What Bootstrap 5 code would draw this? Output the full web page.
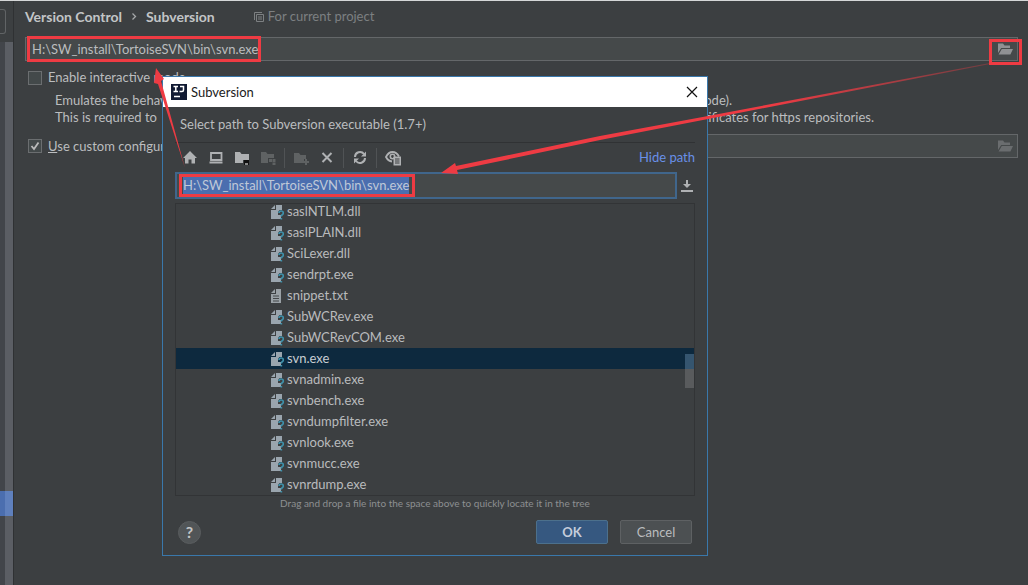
<!DOCTYPE html>
<html lang="en">
<head>
<meta charset="utf-8">
<meta name="viewport" content="width=device-width, initial-scale=1">
<title>Version Control – Subversion</title>
<link href="https://cdn.jsdelivr.net/npm/bootstrap@5.3.0/dist/css/bootstrap.min.css" rel="stylesheet">
<style>
  body { background: #3c3f41; color: #bbbdbf; font: 13px/17px Lato, "Open Sans", sans-serif; border-top: 1px solid #d5d7d8; overflow: hidden; }
  svg { display: block; flex: none; }
  .settings { min-height: calc(100vh - 1px); }
  /* tree edge on the left of the settings page */
  .tree-edge { width: 14px; border-right: 1px solid #2f3133; background: #3c3f41; }
  .search-end { width: 6px; height: 25px; margin-top: 8px; border: 1px solid #616466; border-left: 0; border-radius: 0 3px 3px 0; }
  .tree-body { margin-top: 8px; background: linear-gradient(90deg, #42454a 5px, #5b5e64 5px); }
  .tree-picked { height: 25px; margin-bottom: 69px; background: linear-gradient(90deg, #4b6eaf 5px, #5f80bd 5px); }
  .page-main { padding: 7px 10px 0 11px; min-width: 0; }
  .crumbs { font-weight: 700; font-size: 14px; color: #c3c5c7; }
  .scope { color: #7d8082; margin-left: 39px; }
  .path-box { height: 24px; background: #45494a; border: 1px solid #646769; }
  .exe-path { margin-top: 12px; }
  .path-box input { border: 0; background: transparent; color: inherit; outline: 0; padding: 0 6px; min-width: 0; }
  .path-box button, .tool { border: 0; background: transparent; padding: 0; color: #afb1b3; }
  .path-box button { color: #8f9193; }
  .path-box button:disabled { color: #6a6d6f; }
  .tick-row { margin-top: 8px; padding-left: 3px; gap: 6px; }
  .tick { appearance: none; width: 14px; height: 14px; margin: 0; border: 1px solid #6b6e70; background: #43494a; flex: none; }
  .tick:checked { background: #43494a url("data:image/svg+xml,%3Csvg xmlns='http://www.w3.org/2000/svg' viewBox='0 0 12 12'%3E%3Cpath d='M2.5 6l2.5 3L9.5 2.5' fill='none' stroke='%23bbb' stroke-width='1.8'/%3E%3C/svg%3E"); }
  .hints { padding-left: 30px; margin-top: 6px; white-space: nowrap; }
  .hint-a { width: 677px; }
  .hint-b { width: 819px; }
  /* file chooser window */
  .chooser { left: 162px; top: 75px; width: 546px; height: 480px; border: 1px solid #3a78ab; background: #3c3f41; z-index: 2; }
  .title-bar { height: 30px; background: #fff; color: #1b1b1b; padding: 0 9px 0 8px; }
  .title-bar button { border: 0; background: transparent; padding: 0; color: #111; }
  .chooser-body { padding: 9px 12px 0; }
  .lead-in { padding-left: 5px; }
  .tools { height: 30px; border-top: 1px solid #303234; margin-top: 9px; padding: 0 0 0 7px; }
  .tool-set { gap: 10px; }
  .tool svg, .tool { width: 16px; height: 16px; }
  .tool:disabled { color: #5f6263; }
  .vline { width: 1px; height: 20px; margin: 0 -2px; background: #505355; }
  .hide-path { color: #6990e8; text-decoration: none; }
  .typed { height: 27px; border: 2px solid #40668c; background: #45494a; }
  .typed input { border: 0; outline: 0; padding: 0 6px; background: transparent; color: #bfc8d8; min-width: 0; }
  .typed input::selection { background: #4b6eaf; color: #bfc8d8; }
  .typed-row .tool { margin-left: 2px; }
  .files { height: 293px; margin-top: 4px; border: 1px solid #323436; overflow: hidden; }
  .files ul { margin: -3px 0 0; }
  .files li { height: 21px; padding-left: 94px; gap: 3px; color: #b9bbbd; }
  .files li.picked { background: #0d293e; color: #c8cdd2; }
  .rail { right: 0; top: 0; bottom: 0; width: 9px; }
  .rail i { position: absolute; top: 150px; width: 9px; height: 34px; background: linear-gradient(#35556f 15px, #595b5d 15px); }
  .tip { font-size: 10px; line-height: 14px; color: #8d8f91; }
  .foot { margin-top: 10px; padding: 0 3px; gap: 12px; }
  .help { width: 23px; height: 23px; border: 1px solid #5a5d5f; border-radius: 50%; background: #515557; color: #c3c5c7; font-weight: 700; font-size: 16px; line-height: 20px; padding: 0; }
  .act { width: 72px; height: 24px; padding: 0; font-size: 13px; line-height: 17px; border-radius: 2px; color: #bbbdbf; background: #4c5052; border: 1px solid #5e6163; }
  .act.main { background: #365880; border-color: #4c708c; font-weight: 700; color: #c5cddb; }
  .marks { left: 0; top: 0; z-index: 3; pointer-events: none; }
</style>
</head>
<body class="position-relative">
<svg width="0" height="0" class="position-absolute" aria-hidden="true">
  <symbol id="folder-open" viewBox="0 0 16 16"><path fill="currentColor" d="M1 2.500h5l1.500 2H13V7H4.200L1 12zM4.800 8H16l-2.600 5.500H1.600z"/></symbol>
  <symbol id="unknown-file" viewBox="0 0 16 16"><path fill="#9aa5ae" d="M6 1h6v5H9.500L8 8v7H1V6h5z"/><path fill="#9aa5ae" d="M5 1v4H1zM8 11h3v4H8z"/><path d="M9 9q.2-2 2.200-2t2.200 2q0 1-1.200 1.800-.9.600-.9 1.700M11.300 14v1.600" fill="none" stroke="#3e91ab" stroke-width="1.700"/></symbol>
  <symbol id="text-file" viewBox="0 0 16 16"><path fill="#9aa1a6" d="M6 1h5v14H1V6h5zM5 1v4H1z"/><path d="M3 8h6M3 10.500h6M3 13h6" stroke="#45484a" stroke-width="1"/></symbol>
</svg>

<div class="settings d-flex">
  <aside class="tree-edge d-flex flex-column flex-shrink-0">
    <div class="search-end"></div>
    <div class="tree-body flex-grow-1 d-flex flex-column justify-content-end"><div class="tree-picked"></div></div>
  </aside>
  <main class="page-main flex-grow-1">
    <div class="d-flex align-items-center">
      <nav class="crumbs d-flex align-items-center" aria-label="Breadcrumb">
        <span>Version Control</span>
        <svg class="mx-2" width="8" height="9" viewBox="0 0 8 9"><path d="M2.500 1.500l3 3-3 3" fill="none" stroke="#a5a7a9" stroke-width="1.300"/></svg>
        <span>Subversion</span>
      </nav>
      <span class="scope d-flex align-items-center">
        <svg class="me-1" width="10" height="10" viewBox="0 0 10 10"><path d="M.5 8V.5H8M2.500 2.500h7v7h-7zM4 5h4M4 7h4" fill="none" stroke="currentColor"/></svg>For current project</span>
    </div>
    <div class="path-box exe-path d-flex align-items-center pe-1">
      <input class="flex-grow-1" aria-label="Path to Subversion executable" value="H:\SW_install\TortoiseSVN\bin\svn.exe">
      <button type="button" aria-label="Browse"><svg width="16" height="16"><use href="#folder-open"/></svg></button>
    </div>
    <div class="tick-row d-flex align-items-center">
      <input class="tick" type="checkbox" id="inter"><label for="inter">Enable interactive mode</label>
    </div>
    <div class="hints">
      <div class="hint-a d-flex justify-content-between"><span>Emulates the behavior</span><span>mode).</span></div>
      <div class="hint-b d-flex justify-content-between"><span>This is required to</span><span>certificates for https repositories.</span></div>
    </div>
    <div class="tick-row d-flex align-items-center">
      <input class="tick" type="checkbox" id="conf" checked><label for="conf"><u>U</u>se custom configuration directory:</label>
      <div class="path-box d-flex align-items-center flex-grow-1 pe-1">
        <input class="flex-grow-1" aria-label="Configuration directory" disabled>
        <button type="button" disabled aria-label="Browse configuration directory"><svg width="16" height="16"><use href="#folder-open"/></svg></button>
      </div>
    </div>
  </main>
</div>

<section class="chooser position-absolute" role="dialog" aria-label="Subversion">
  <header class="title-bar d-flex align-items-center">
    <svg width="16" height="16" viewBox="0 0 16 16"><path fill="#111a33" d="M0 0h16v16H0z"/><path d="M2.500 2.500H7M4.800 2.500v5M2.500 7.500H7M9 2.500h3.500V6q0 1.500-1.500 1.500H8.500M3 12.500h6" fill="none" stroke="#fff" stroke-width="1.500"/></svg>
    <span class="ps-1">Subversion</span>
    <button type="button" class="ms-auto" aria-label="Close"><svg width="12" height="12" viewBox="0 0 12 12"><path d="M1 1l10 10M11 1L1 11" stroke="currentColor" stroke-width="1.200"/></svg></button>
  </header>
  <div class="chooser-body">
    <div class="lead-in">Select path to Subversion executable (1.7+)</div>
    <div class="tools d-flex align-items-center">
      <div class="tool-set d-flex align-items-center">
        <button class="tool" aria-label="Home"><svg viewBox="0 0 16 16"><path fill="currentColor" d="M8 1l7 7h-2v5.500H9.500v-4h-3v4H3V8H1z"/></svg></button>
        <button class="tool" aria-label="Desktop"><svg viewBox="0 0 16 16"><path fill="none" stroke="currentColor" stroke-width="1.800" d="M3 3h10.500v7H3z"/><path fill="currentColor" d="M1.500 11.500h13v2h-13z"/></svg></button>
        <button class="tool" aria-label="Project"><svg viewBox="0 0 16 16"><path fill="currentColor" d="M1 2h5l1.500 2H15v6H9v3H1z"/><path fill="#111" d="M10 10h5v5h-5z"/><path d="M11 14h3" stroke="#fff"/></svg></button>
        <button class="tool" disabled aria-label="Module"><svg viewBox="0 0 16 16"><path fill="currentColor" d="M1 2h5l1.500 2H14v4H8v5H1zM9 9h3v3H9zM12.500 9h3v3h-3zM12.500 12.500h3V15h-3z"/></svg></button>
        <span class="vline"></span>
        <button class="tool" disabled aria-label="New folder"><svg viewBox="0 0 16 16"><path fill="currentColor" d="M1 3h5l1.500 2H13v4h-2v4H1zM12 9h2v2h2v2h-2v2h-2v-2h-1v-2h1z"/></svg></button>
        <button class="tool" aria-label="Delete"><svg viewBox="0 0 16 16"><path d="M3.500 3l9 9M12.500 3l-9 9" stroke="currentColor" stroke-width="2"/></svg></button>
        <span class="vline"></span>
        <button class="tool" aria-label="Refresh"><svg viewBox="0 0 16 16"><path fill="none" stroke="currentColor" stroke-width="2" d="M3 7a5 5 0 0 1 9-3M13 8a5 5 0 0 1-9 3"/><path fill="currentColor" d="M14 1.500v5H9zM2 13.500v-5h5z"/></svg></button>
        <span class="vline"></span>
        <button class="tool" aria-label="Show hidden files"><svg viewBox="0 0 16 16"><path fill="none" stroke="currentColor" stroke-width="1.800" d="M14 6.500Q11.500 2 7.500 2T1 7q2 4 6 4.500"/><circle cx="7.500" cy="6.500" r="2.200" fill="none" stroke="currentColor" stroke-width="1.600"/><path fill="currentColor" d="M8.500 6.500H16V15.500H8.500z"/><path d="M10 9h4.500M10 11h4.500M10 13h4.500" stroke="#3c3f41"/></svg></button>
      </div>
      <a class="hide-path ms-auto" href="#">Hide path</a>
    </div>
    <div class="typed-row d-flex align-items-center">
      <div class="typed d-flex flex-grow-1"><input id="typed" class="flex-grow-1" aria-label="Path" value="H:\SW_install\TortoiseSVN\bin\svn.exe"></div>
      <button class="tool flex-shrink-0" aria-label="History"><svg viewBox="0 0 16 16"><path fill="currentColor" d="M7 2h2v4h3l-4 4-4-4h3zM2 12h12v2H2z"/></svg></button>
    </div>
    <div class="files position-relative">
      <ul class="list-unstyled" id="files"></ul>
      <div class="rail position-absolute"><i></i></div>
    </div>
    <div class="tip text-center">Drag and drop a file into the space above to quickly locate it in the tree</div>
    <div class="foot d-flex align-items-center">
      <button type="button" class="help me-auto" aria-label="Help">?</button>
      <button type="button" class="act main">OK</button>
      <button type="button" class="act">Cancel</button>
    </div>
  </div>
</section>

<!-- red call-out boxes and arrows drawn over the windows -->
<svg class="marks position-absolute" width="1028" height="584" viewBox="0 1 1028 584" aria-hidden="true">
  <defs><linearGradient id="fade" gradientUnits="userSpaceOnUse" x1="441" y1="0" x2="990" y2="0"><stop offset=".6" stop-color="#ee3b43"/><stop offset="1" stop-color="#ee3b43" stop-opacity=".3"/></linearGradient></defs>
  <g fill="none" stroke="#ee3b43" stroke-width="3"><path d="M28.500 37.500h231v23h-231zM180.500 175.500h233v20h-233zM990.500 40.500h30v23h-30z"/></g>
  <path fill="#ee3b43" d="M156 68l8 11-3 2 24 87-27-84-4-1z"/>
  <path fill="url(#fade)" d="M441 173l14-10 1 3 144-30 108-20 282-53v1L708 119l-108 21-143 30 1 4z"/>
</svg>

<script src="https://cdn.jsdelivr.net/npm/bootstrap@5.3.0/dist/js/bootstrap.bundle.min.js"></script>
<script>
  const names = ["saslNTLM.dll", "saslPLAIN.dll", "SciLexer.dll", "sendrpt.exe", "snippet.txt", "SubWCRev.exe", "SubWCRevCOM.exe", "svn.exe", "svnadmin.exe", "svnbench.exe", "svndumpfilter.exe", "svnlook.exe", "svnmucc.exe", "svnrdump.exe"];
  document.getElementById("files").innerHTML = names.map(n =>
    `<li class="d-flex align-items-center${n === "svn.exe" ? " picked" : ""}"><svg width="14" height="16" viewBox="0 0 14 16"><use width="16" height="16" href="#${n.endsWith(".txt") ? "text-file" : "unknown-file"}"/></svg>${n}</li>`).join("");
  const typed = document.getElementById("typed");
  typed.focus();
  typed.select();
</script>
</body>
</html>
